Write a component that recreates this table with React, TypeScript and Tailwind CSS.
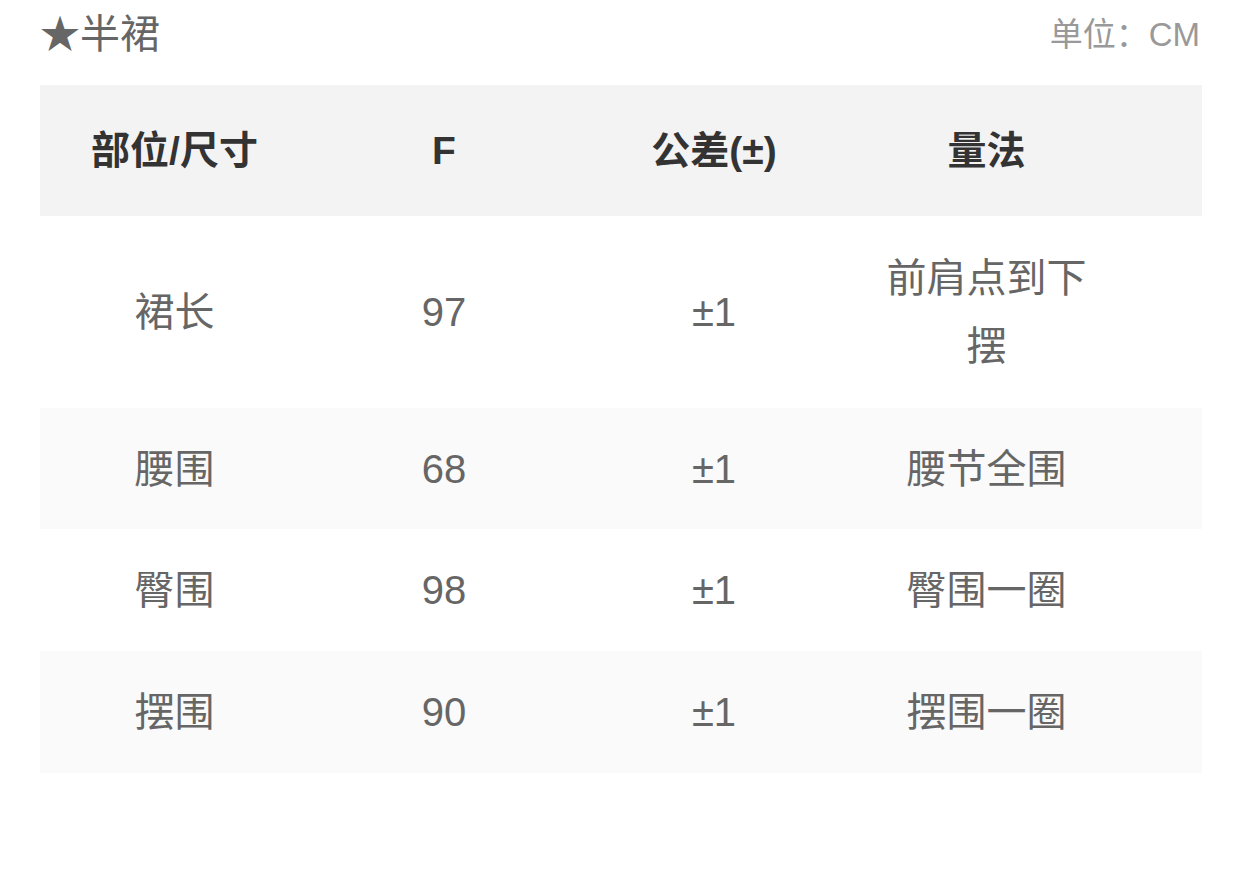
import React from "react";

const rows = [
  { name: "裙长", f: "97", tol: "±1", method: "前肩点到下摆", h: "h-[192px]", bg: "bg-white" },
  { name: "腰围", f: "68", tol: "±1", method: "腰节全围", h: "h-[121px]", bg: "bg-[#fafafa]" },
  { name: "臀围", f: "98", tol: "±1", method: "臀围一圈", h: "h-[122px]", bg: "bg-white" },
  { name: "摆围", f: "90", tol: "±1", method: "摆围一圈", h: "h-[122px]", bg: "bg-[#fafafa]" },
];

export default function App() {
  return (
    <div
      className="w-[1242px] h-[891px] bg-white px-[40px]"
      style={{ fontFamily: '"Liberation Sans", "Noto Sans CJK SC", sans-serif' }}
    >
      <div className="h-[68px] flex items-center justify-between">
        <div className="text-[40px] leading-none text-[#666666]">★半裙</div>
        <div className="text-[33px] leading-none text-[#999999] pr-[2px]">单位：CM</div>
      </div>
      <div className="mt-[17px] w-[1162px]">
        <div className="h-[131px] bg-[#f3f3f3] grid grid-cols-[269px_270px_270px_275px] items-center">
          {["部位/尺寸", "F", "公差(±)", "量法"].map((t) => (
            <div key={t} className="text-center text-[39px] font-bold text-[#333333] leading-none">
              {t}
            </div>
          ))}
        </div>
        {rows.map((r) => (
          <div
            key={r.name}
            className={`${r.h} ${r.bg} grid grid-cols-[269px_270px_270px_275px] items-center`}
          >
            <div className="text-center text-[40px] text-[#666666] leading-[68px]">{r.name}</div>
            <div className="text-center text-[40px] text-[#666666] leading-[68px]">{r.f}</div>
            <div className="text-center text-[40px] text-[#666666] leading-[68px]">{r.tol}</div>
            <div className="text-center text-[40px] text-[#666666] leading-[68px] px-[24px]">
              {r.method}
            </div>
          </div>
        ))}
      </div>
    </div>
  );
}
